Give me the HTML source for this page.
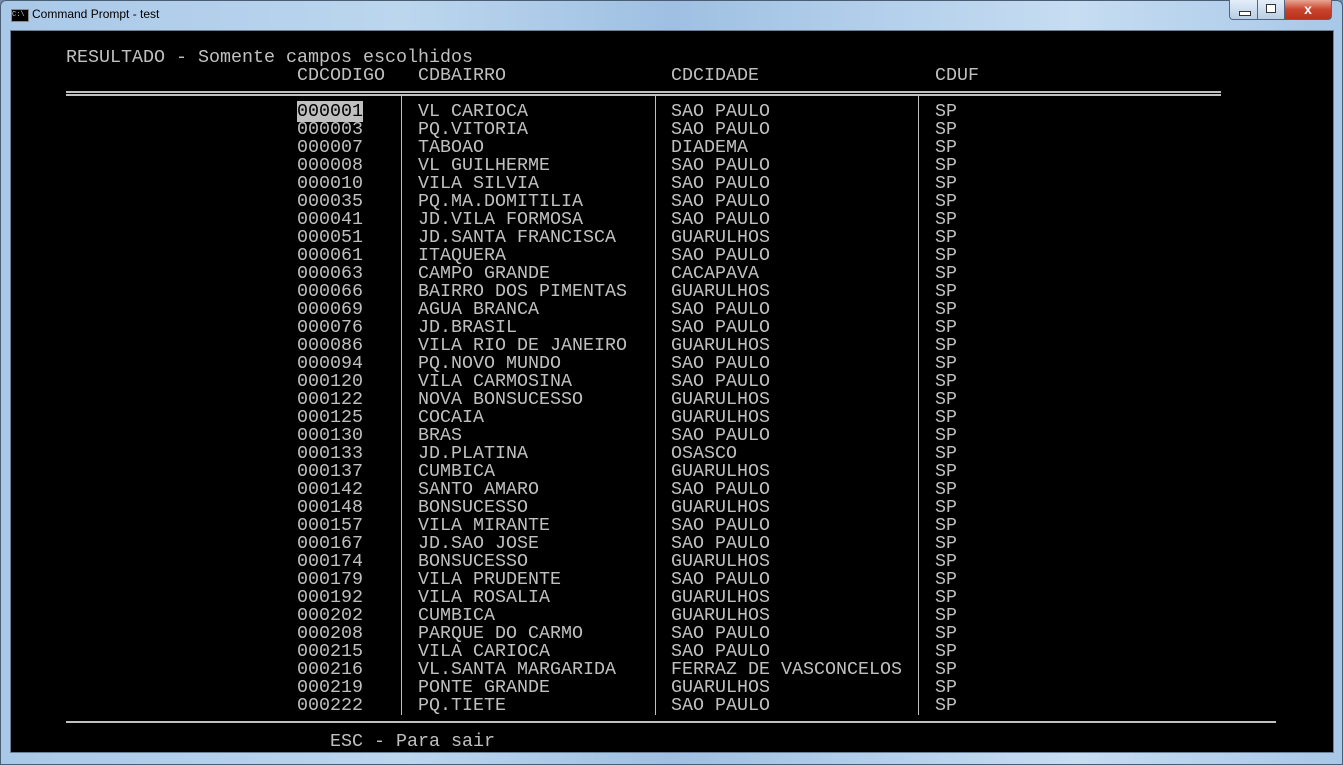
<!DOCTYPE html>
<html><head><meta charset="utf-8"><style>
body{margin:0;width:1343px;height:765px;overflow:hidden;background:#6e8aa8;position:relative;font-family:"Liberation Mono",monospace}
.frame{position:absolute;left:0;top:0;width:1343px;height:765px;background:linear-gradient(90deg,#a9c8e8 0%,#bcd6ee 30%,#9fc0e3 50%,#c6ddf2 80%,#a8c7e7 100%);border-radius:6px 6px 0 0;box-shadow:inset 0 0 0 1px #4a5e74}
.ttl{position:absolute;left:32px;top:7px;font:12px "Liberation Sans",sans-serif;color:#000}
.ico{position:absolute;left:11px;top:9px;width:16px;height:11px;background:#000;border:1px solid #888;color:#ccc;font:7px "Liberation Mono",monospace;line-height:11px}
.con{position:absolute;left:10px;top:30px;width:1322px;height:721px;background:#000;border:1px solid #6b7f95}
.r{position:absolute;color:#c0c0c0;font-size:18.33px;line-height:18px;white-space:pre}
.btn{position:absolute;top:0;height:19px;border:1px solid #4f6783;border-top:none}
.hl{background:#c0c0c0;color:#000}
.vl{position:absolute;top:96px;width:1px;height:619px;background:#c0c0c0}
</style></head><body>
<div class="frame"></div>
<div class="ico">C:\</div>
<div class="ttl">Command Prompt - test</div>
<div class="btn" style="left:1229px;width:27px;background:linear-gradient(#e4eef9,#b9cde4);border-radius:0 0 0 4px"><div style="position:absolute;left:9px;top:11px;width:10px;height:3px;background:#fff;border:1px solid #333"></div></div>
<div class="btn" style="left:1257px;width:26px;background:linear-gradient(#e4eef9,#b9cde4)"><div style="position:absolute;left:8px;top:4px;width:8px;height:7px;border:1px solid #333;background:#fff"></div></div>
<div class="btn" style="left:1284px;width:46px;background:linear-gradient(#e8a593,#c9442c 50%,#b8321c);border-radius:0 0 4px 0;color:#fff;font:bold 14px 'Liberation Sans',sans-serif;text-align:center;line-height:18px">x</div>
<div class="con"></div>
<div class="r" style="left:66px;top:49px">RESULTADO - Somente campos escolhidos</div>
<div class="r" style="left:297px;top:67px">CDCODIGO</div>
<div class="r" style="left:418px;top:67px">CDBAIRRO</div>
<div class="r" style="left:671px;top:67px">CDCIDADE</div>
<div class="r" style="left:935px;top:67px">CDUF</div>
<div style="position:absolute;left:66px;top:91px;width:1155px;height:2px;background:#c0c0c0"></div>
<div style="position:absolute;left:66px;top:94px;width:1155px;height:2px;background:#c0c0c0"></div>
<div class="vl" style="left:401px"></div>
<div class="vl" style="left:655px"></div>
<div class="vl" style="left:918px"></div>
<div style="position:absolute;left:66px;top:721px;width:1210px;height:2px;background:#c0c0c0"></div>
<div class="r" style="left:330px;top:733px">ESC - Para sair</div>
<div class="r" style="left:297px;top:103px"><span class="hl">000001</span>
000003
000007
000008
000010
000035
000041
000051
000061
000063
000066
000069
000076
000086
000094
000120
000122
000125
000130
000133
000137
000142
000148
000157
000167
000174
000179
000192
000202
000208
000215
000216
000219
000222</div>
<div class="r" style="left:418px;top:103px">VL CARIOCA
PQ.VITORIA
TABOAO
VL GUILHERME
VILA SILVIA
PQ.MA.DOMITILIA
JD.VILA FORMOSA
JD.SANTA FRANCISCA
ITAQUERA
CAMPO GRANDE
BAIRRO DOS PIMENTAS
AGUA BRANCA
JD.BRASIL
VILA RIO DE JANEIRO
PQ.NOVO MUNDO
VILA CARMOSINA
NOVA BONSUCESSO
COCAIA
BRAS
JD.PLATINA
CUMBICA
SANTO AMARO
BONSUCESSO
VILA MIRANTE
JD.SAO JOSE
BONSUCESSO
VILA PRUDENTE
VILA ROSALIA
CUMBICA
PARQUE DO CARMO
VILA CARIOCA
VL.SANTA MARGARIDA
PONTE GRANDE
PQ.TIETE</div>
<div class="r" style="left:671px;top:103px">SAO PAULO
SAO PAULO
DIADEMA
SAO PAULO
SAO PAULO
SAO PAULO
SAO PAULO
GUARULHOS
SAO PAULO
CACAPAVA
GUARULHOS
SAO PAULO
SAO PAULO
GUARULHOS
SAO PAULO
SAO PAULO
GUARULHOS
GUARULHOS
SAO PAULO
OSASCO
GUARULHOS
SAO PAULO
GUARULHOS
SAO PAULO
SAO PAULO
GUARULHOS
SAO PAULO
GUARULHOS
GUARULHOS
SAO PAULO
SAO PAULO
FERRAZ DE VASCONCELOS
GUARULHOS
SAO PAULO</div>
<div class="r" style="left:935px;top:103px">SP
SP
SP
SP
SP
SP
SP
SP
SP
SP
SP
SP
SP
SP
SP
SP
SP
SP
SP
SP
SP
SP
SP
SP
SP
SP
SP
SP
SP
SP
SP
SP
SP
SP</div>
</body></html>
